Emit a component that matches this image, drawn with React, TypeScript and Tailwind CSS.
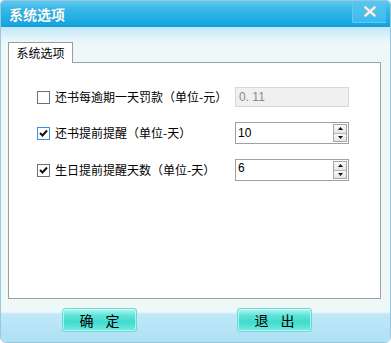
import React from "react";

const cjk = { fontFamily: '"Noto Sans CJK SC", "Noto Sans", sans-serif' };

function Check({ checked, focus }: { checked: boolean; focus?: boolean }) {
  return (
    <div
      className={`w-[13px] h-[13px] shrink-0 bg-white border flex items-center justify-center ${
        focus ? "border-[#3d8ee6]" : "border-[#707070]"
      }`}
    >
      {checked && (
        <svg width="9" height="8" viewBox="0 0 9 8">
          <path d="M1 4 L3.5 6.5 L8 1.5" stroke="#111" strokeWidth="2" fill="none" />
        </svg>
      )}
    </div>
  );
}

function Spin() {
  return (
    <div className="w-[14px] h-[18px] border border-[#a8a8a8] flex flex-col bg-[#f2f2f2]">
      <div className="flex-1 flex items-center justify-center border-b border-[#b8b8b8] bg-[linear-gradient(to_bottom,#fafafa,#e4e4e4)]">
        <svg width="5" height="3" viewBox="0 0 5 3">
          <path d="M0 3 L2.5 0 L5 3 Z" fill="#111" />
        </svg>
      </div>
      <div className="flex-1 flex items-center justify-center bg-[linear-gradient(to_bottom,#fafafa,#e4e4e4)]">
        <svg width="5" height="3" viewBox="0 0 5 3">
          <path d="M0 0 L2.5 3 L5 0 Z" fill="#111" />
        </svg>
      </div>
    </div>
  );
}

function Btn({ label }: { label: string }) {
  return (
    <div className="w-[75px] h-[24px] rounded-[3px] border border-[#62ddd6] bg-[linear-gradient(to_bottom,#b6f5f1_0%,#5fe3d8_30%,#40dacd_60%,#7aeae2_100%)] flex items-center justify-center shadow-[inset_0_0_0_1px_rgba(255,255,255,0.5)]">
      <span className="text-[14px] text-black tracking-[12px] pl-[12px]" style={cjk}>
        {label}
      </span>
    </div>
  );
}

export default function App() {
  return (
    <div className="w-[391px] h-[343px] bg-white" style={cjk}>
      <div className="w-[391px] h-[343px] flex flex-col rounded-t-[4px] rounded-b-[6px] overflow-hidden border border-[#9cc6dc]">
        {/* Title bar */}
        <div className="h-[26px] shrink-0 flex items-center justify-between bg-[linear-gradient(to_bottom,#5fcaf0_0%,#33b7e8_35%,#1caae2_80%,#129fdb_100%)]">
          <span className="pl-[8px] text-[14px] font-bold text-white leading-none [text-shadow:0_0_1px_rgba(0,60,100,0.4)]">
            系统选项
          </span>
          <div className="w-[34px] h-[22px] self-start mr-[4px] border-l border-b border-[#62c9ef] rounded-bl-[2px] bg-[linear-gradient(to_bottom,#55c7f0,#3abbec)] flex items-center justify-center">
            <svg width="14" height="11" viewBox="0 0 14 11">
              <path d="M2.5 1.5 L11.5 9.5 M11.5 1.5 L2.5 9.5" stroke="#a9b9c0" strokeWidth="3.4" strokeLinecap="square" />
              <path d="M2.5 1.5 L11.5 9.5 M11.5 1.5 L2.5 9.5" stroke="#f4f6f6" strokeWidth="2" strokeLinecap="square" />
            </svg>
          </div>
        </div>

        {/* Body */}
        <div className="flex-1 flex flex-col bg-[linear-gradient(to_bottom,#bfe7f7_0px,#e8f6fa_13px,#eff8f8_20px,#eff8f8_285px,#bfe8f8_287px,#aee0f4_315px)]">
          {/* Tabs */}
          <div className="pl-[7px] pt-[15px] pr-[9px]">
            <div className="w-[65px] h-[21px] bg-white border border-b-0 border-[#9c9c9c] flex items-center justify-center relative z-10 -mb-px">
              <span className="text-[12px] text-black leading-none">系统选项</span>
            </div>
            <div className="h-[237px] bg-white border border-[#a0a0a0] flex flex-col pl-[28px] pt-[24px] gap-[15px]">
              <div className="flex items-center h-[20px]">
                <div className="w-[198px] flex items-center gap-[5px]">
                  <Check checked={false} />
                  <span className="text-[12px] text-black leading-none whitespace-nowrap">还书每逾期一天罚款（单位-元）</span>
                </div>
                <div className="w-[114px] h-[20px] border border-[#d8d8d8] bg-[#f0f0f0] flex items-center pl-[3px]">
                  <span className="text-[12px] text-[#8a8a8a] leading-none" style={{ fontFamily: '"Liberation Sans", sans-serif' }}>0. 11</span>
                </div>
              </div>
              <div className="flex items-center h-[22px]">
                <div className="w-[198px] flex items-center gap-[5px]">
                  <Check checked focus />
                  <span className="text-[12px] text-black leading-none whitespace-nowrap">还书提前提醒（单位-天）</span>
                </div>
                <div className="w-[114px] h-[22px] border border-[#a0a0a0] bg-white flex items-center justify-between pl-[2px] pr-[1px]">
                  <span className="text-[12px] text-black leading-none" style={{ fontFamily: '"Liberation Sans", sans-serif' }}>10</span>
                  <Spin />
                </div>
              </div>
              <div className="flex items-center h-[22px]">
                <div className="w-[198px] flex items-center gap-[5px]">
                  <Check checked />
                  <span className="text-[12px] text-black leading-none whitespace-nowrap">生日提前提醒天数（单位-天）</span>
                </div>
                <div className="w-[114px] h-[22px] border border-[#a0a0a0] bg-white flex items-center justify-between pl-[2px] pr-[1px]">
                  <span className="text-[12px] text-black leading-none self-start pt-[2px]" style={{ fontFamily: '"Liberation Sans", sans-serif' }}>6</span>
                  <Spin />
                </div>
              </div>
            </div>
          </div>

          {/* Buttons */}
          <div className="flex pl-[61px] pt-[9px] gap-[100px]">
            <Btn label="确定" />
            <Btn label="退出" />
          </div>
        </div>
      </div>
    </div>
  );
}
